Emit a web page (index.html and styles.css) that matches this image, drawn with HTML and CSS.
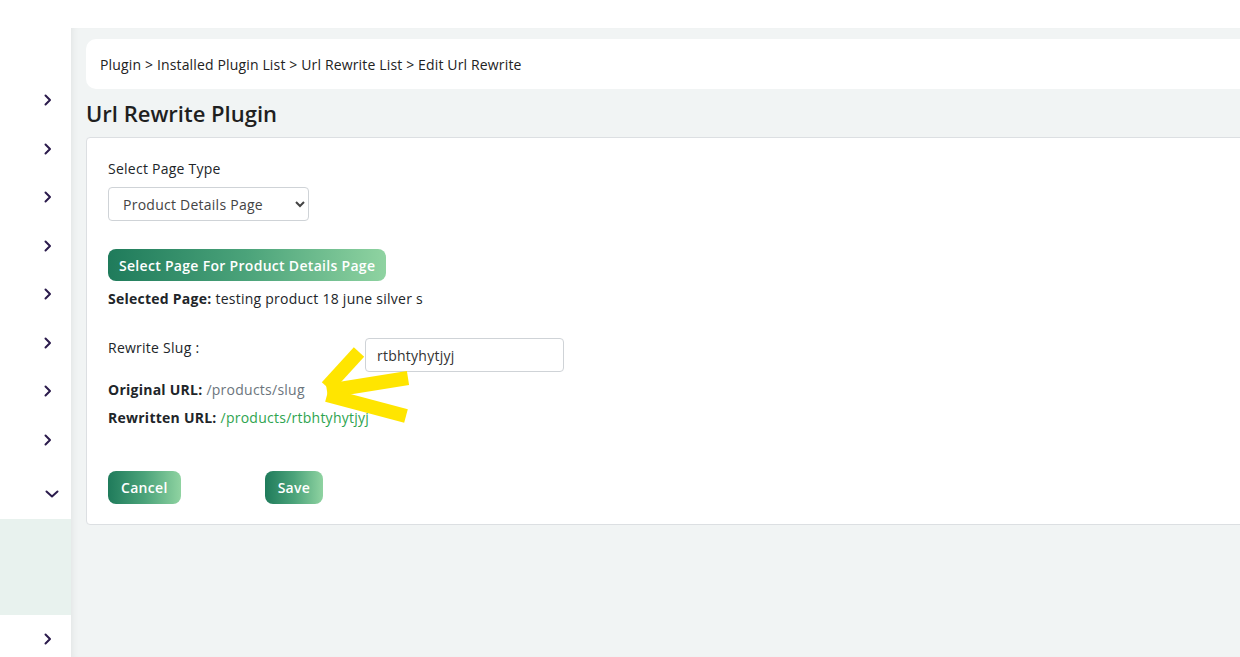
FILE: index.html
```html
<!DOCTYPE html>
<html lang="en">
<head>
    <meta charset="UTF-8">
    <meta name="viewport" content="width=device-width, initial-scale=1.0">
    <title>Edit Url Rewrite</title>
    <link rel="stylesheet" href="styles.css">
</head>
<body>
    <div class="topbar"></div>

    <div class="layout">
        <aside class="sidebar">
            <div class="nav-item"><svg class="chev" viewBox="0 0 8 12"><path d="M1.5 1.5 L6 6 L1.5 10.5"/></svg></div>
            <div class="nav-item"><svg class="chev" viewBox="0 0 8 12"><path d="M1.5 1.5 L6 6 L1.5 10.5"/></svg></div>
            <div class="nav-item"><svg class="chev" viewBox="0 0 8 12"><path d="M1.5 1.5 L6 6 L1.5 10.5"/></svg></div>
            <div class="nav-item"><svg class="chev" viewBox="0 0 8 12"><path d="M1.5 1.5 L6 6 L1.5 10.5"/></svg></div>
            <div class="nav-item"><svg class="chev" viewBox="0 0 8 12"><path d="M1.5 1.5 L6 6 L1.5 10.5"/></svg></div>
            <div class="nav-item"><svg class="chev" viewBox="0 0 8 12"><path d="M1.5 1.5 L6 6 L1.5 10.5"/></svg></div>
            <div class="nav-item"><svg class="chev" viewBox="0 0 8 12"><path d="M1.5 1.5 L6 6 L1.5 10.5"/></svg></div>
            <div class="nav-item"><svg class="chev" viewBox="0 0 8 12"><path d="M1.5 1.5 L6 6 L1.5 10.5"/></svg></div>
            <div class="nav-item open"><svg class="chev-down" viewBox="0 0 14 8"><path d="M1.5 1.5 L7 6.5 L12.5 1.5"/></svg></div>
            <div class="submenu"></div>
            <div class="nav-item"><svg class="chev" viewBox="0 0 8 12"><path d="M1.5 1.5 L6 6 L1.5 10.5"/></svg></div>
        </aside>

        <main class="main">
            <div class="breadcrumb">
                Plugin &gt; Installed Plugin List &gt; Url Rewrite List &gt; Edit Url Rewrite
            </div>

            <h2 class="page-title">Url Rewrite Plugin</h2>

            <div class="card">
                <label class="field-label" for="page-type">Select Page Type</label>
                <select id="page-type" class="form-select">
                    <option>Product Details Page</option>
                    <option>Category Page</option>
                    <option>Static Page</option>
                </select>

                <button class="btn-grad btn-pick">Select Page For Product Details Page</button>

                <p class="info-line"><strong>Selected Page:</strong> testing product 18 june silver s</p>

                <div class="slug-row">
                    <label class="slug-label" for="slug">Rewrite Slug :</label>
                    <input id="slug" class="form-input" type="text" value="rtbhtyhytjyj">
                </div>

                <p class="url-line"><strong>Original URL:</strong> <span class="url-orig">/products/slug</span></p>
                <p class="url-line"><strong>Rewritten URL:</strong> <span class="url-new">/products/rtbhtyhytjyj</span></p>

                <div class="actions">
                    <button class="btn-grad">Cancel</button>
                    <button class="btn-grad btn-save">Save</button>
                </div>

                <!-- highlighter arrow -->
                <svg class="marker" viewBox="0 0 100 80">
                    <path d="M44 7 L12 42"/>
                    <path d="M12 46 L93 33"/>
                    <path d="M12 50 L91 71"/>
                </svg>
            </div>
        </main>
    </div>
</body>
</html>
```

FILE: styles.css
```css
* {
    margin: 0;
    padding: 0;
    box-sizing: border-box;
}

body {
    font-family: 'Open Sans', 'Noto Sans', sans-serif;
    font-size: 14px;
    letter-spacing: 0.25px;
    color: #212529;
    background-color: #ffffff;
    overflow: hidden;
}

.topbar {
    height: 28px;
    background-color: #ffffff;
}

.layout {
    display: flex;
    height: 629px;
}

/* sidebar */
.sidebar {
    width: 71px;
    flex-shrink: 0;
    background-color: #ffffff;
    padding-top: 48px;
    display: flex;
    flex-direction: column;
}

.nav-item {
    height: 48.5px;
    display: flex;
    align-items: center;
    justify-content: flex-end;
    padding-right: 19px;
    flex-shrink: 0;
}

.nav-item.open {
    height: 55px;
    padding-right: 12px;
    padding-top: 4px;
}

.chev {
    width: 8px;
    height: 12px;
}

.chev-down {
    width: 14px;
    height: 8px;
}

.chev path,
.chev-down path {
    fill: none;
    stroke: #2b1b4c;
    stroke-width: 2;
    stroke-linecap: round;
    stroke-linejoin: round;
}

.submenu {
    height: 96px;
    background-color: #e8f2ee;
    flex-shrink: 0;
}

/* main area */
.main {
    flex: 1;
    background-color: #f1f4f4;
    box-shadow: inset 6px 0 6px -4px rgba(0, 0, 0, 0.06);
    padding: 11px 0 0 15px;
    margin-right: -12px;
}

.breadcrumb {
    background-color: #ffffff;
    border-radius: 10px;
    height: 50px;
    padding: 0 14px;
    display: flex;
    align-items: center;
    font-size: 14px;
    letter-spacing: 0.15px;
    color: #222222;
}

.page-title {
    font-size: 22px;
    font-weight: 600;
    letter-spacing: 0;
    color: #1f1f1f;
    height: 48px;
    line-height: 48px;
}

.card {
    position: relative;
    background-color: #ffffff;
    border: 1px solid #dcdfe2;
    border-radius: 4px;
    padding: 21px 21px 20px;
}

.field-label {
    display: block;
    line-height: 20px;
    margin-bottom: 8px;
}

.form-select {
    display: block;
    width: 201px;
    height: 34px;
    padding: 0 8px 0 10px;
    border: 1px solid #cfd3d7;
    border-radius: 4px;
    background-color: #ffffff;
    font-family: inherit;
    font-size: 14px;
    letter-spacing: 0.25px;
    color: #444444;
}

.btn-grad {
    height: 33px;
    padding: 0 13px;
    border: none;
    border-radius: 8px;
    background: linear-gradient(90deg, #1f7b5b 0%, #4ba37a 50%, #8fd3a1 100%);
    color: #ffffff;
    font-family: inherit;
    font-size: 14px;
    font-weight: 600;
    letter-spacing: 0.3px;
    cursor: pointer;
}

.btn-pick {
    display: block;
    height: 32px;
    margin-top: 28px;
    padding: 0 11px;
}

.info-line {
    line-height: 20px;
    margin-top: 8px;
}

strong {
    font-weight: 700;
}

.slug-row {
    display: flex;
    align-items: flex-start;
    margin-top: 29px;
}

.slug-label {
    width: 257px;
    line-height: 20px;
}

.form-input {
    width: 199px;
    height: 34px;
    padding: 0 11px;
    border: 1px solid #cfd3d7;
    border-radius: 4px;
    font-family: inherit;
    font-size: 14px;
    letter-spacing: 0.25px;
    color: #333333;
}

.url-line {
    line-height: 20px;
    margin-top: 8px;
}

.url-line:first-of-type {
    margin-top: 7px;
}

.url-orig {
    color: #6c757d;
}

.url-new {
    color: #2ea44f;
}

.actions {
    display: flex;
    margin-top: 43px;
}

.btn-save {
    margin-left: 84px;
}

.marker {
    position: absolute;
    left: 228px;
    top: 207px;
    width: 100px;
    height: 80px;
    pointer-events: none;
}

.marker path {
    fill: none;
    stroke: #ffe500;
    stroke-width: 14;
    stroke-linecap: butt;
    stroke-linejoin: round;
}
```
